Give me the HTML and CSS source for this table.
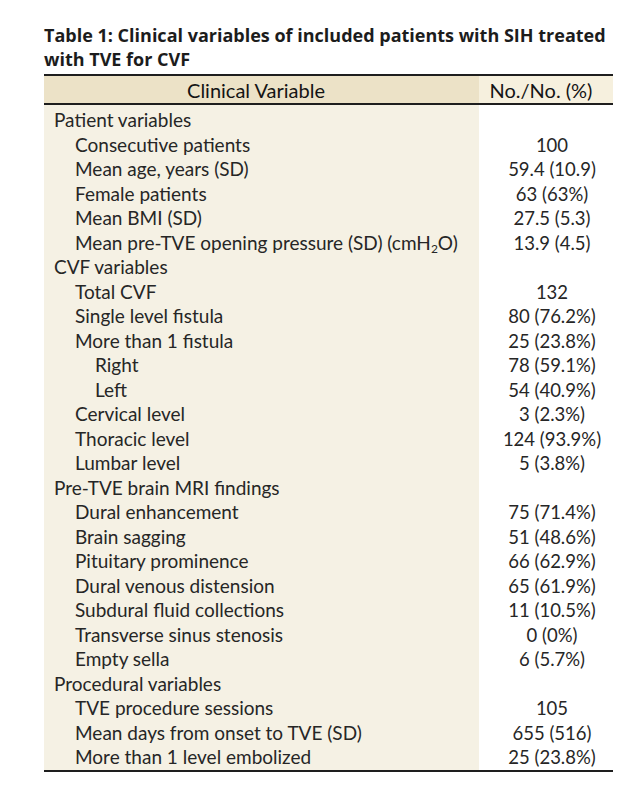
FILE: index.html
```html
<!DOCTYPE html>
<html>
<head>
<meta charset="utf-8">
<link rel="stylesheet" href="styles.css">
</head>
<body>
<div class="page">
  <h1 class="title">Table 1: Clinical variables of included patients with SIH treated<br>with TVE for CVF</h1>
  <table class="tbl">
    <thead>
      <tr><th class="h-var">Clinical Variable</th><th class="h-val">No./No. (%)</th></tr>
    </thead>
    <tbody>
      <tr class="first"><td class="var l0">Patient variables</td><td class="val"></td></tr>
      <tr><td class="var l1">Consecutive patients</td><td class="val">100</td></tr>
      <tr><td class="var l1">Mean age, years (SD)</td><td class="val">59.4 (10.9)</td></tr>
      <tr><td class="var l1">Female patients</td><td class="val">63 (63%)</td></tr>
      <tr><td class="var l1">Mean BMI (SD)</td><td class="val">27.5 (5.3)</td></tr>
      <tr><td class="var l1">Mean pre-TVE opening pressure (SD) (cmH<sub>2</sub>O)</td><td class="val">13.9 (4.5)</td></tr>
      <tr><td class="var l0">CVF variables</td><td class="val"></td></tr>
      <tr><td class="var l1">Total CVF</td><td class="val">132</td></tr>
      <tr><td class="var l1">Single level fistula</td><td class="val">80 (76.2%)</td></tr>
      <tr><td class="var l1">More than 1 fistula</td><td class="val">25 (23.8%)</td></tr>
      <tr><td class="var l2">Right</td><td class="val">78 (59.1%)</td></tr>
      <tr><td class="var l2">Left</td><td class="val">54 (40.9%)</td></tr>
      <tr><td class="var l1">Cervical level</td><td class="val">3 (2.3%)</td></tr>
      <tr><td class="var l1">Thoracic level</td><td class="val">124 (93.9%)</td></tr>
      <tr><td class="var l1">Lumbar level</td><td class="val">5 (3.8%)</td></tr>
      <tr><td class="var l0">Pre-TVE brain MRI findings</td><td class="val"></td></tr>
      <tr><td class="var l1">Dural enhancement</td><td class="val">75 (71.4%)</td></tr>
      <tr><td class="var l1">Brain sagging</td><td class="val">51 (48.6%)</td></tr>
      <tr><td class="var l1">Pituitary prominence</td><td class="val">66 (62.9%)</td></tr>
      <tr><td class="var l1">Dural venous distension</td><td class="val">65 (61.9%)</td></tr>
      <tr><td class="var l1">Subdural fluid collections</td><td class="val">11 (10.5%)</td></tr>
      <tr><td class="var l1">Transverse sinus stenosis</td><td class="val">0 (0%)</td></tr>
      <tr><td class="var l1">Empty sella</td><td class="val">6 (5.7%)</td></tr>
      <tr><td class="var l0">Procedural variables</td><td class="val"></td></tr>
      <tr><td class="var l1">TVE procedure sessions</td><td class="val">105</td></tr>
      <tr><td class="var l1">Mean days from onset to TVE (SD)</td><td class="val">655 (516)</td></tr>
      <tr class="last"><td class="var l1">More than 1 level embolized</td><td class="val">25 (23.8%)</td></tr>
    </tbody>
  </table>
</div>
</body>
</html>
```
FILE: styles.css
```css
html, body {
  margin: 0;
  padding: 0;
  background: #ffffff;
}
.page {
  padding: 24px 0 0 44px;
  color: #262626;
  font-family: "Lato", "Open Sans", sans-serif;
}
.title {
  margin: 0 0 3px 0;
  font-family: "Open Sans", sans-serif;
  font-weight: 700;
  font-size: 18px;
  line-height: 23.5px;
  color: #1c1c1c;
  width: 586px;
  white-space: nowrap;
}
.tbl {
  border-collapse: collapse;
  width: 569px;
  font-size: 19px;
}
.tbl th {
  font-weight: 400;
  font-size: 20px;
  height: 27px;
  padding: 0;
  border-top: 2px solid #1e1e1e;
  border-bottom: 2px solid #1e1e1e;
  text-align: center;
  color: #141414;
}
.h-var {
  width: 424px;
  background: #ece2c7;
  padding-right: 11px !important;
}
.h-val {
  background: #f6f0de;
  text-align: right;
  padding-right: 10px !important;
}
.tbl td {
  padding: 0;
  height: 24.5px;
  line-height: 24.5px;
  white-space: nowrap;
}
.var {
  background: #f5f1e4;
}
.val {
  background: #ffffff;
  text-align: center;
  font-size: 18.5px;
  padding-left: 12px !important;
}
.l0 { padding-left: 10px !important; }
.l1 { padding-left: 31px !important; }
.l2 { padding-left: 51px !important; }
.first td {
  padding-top: 3px !important;
}
.last td {
  border-bottom: 2px solid #1e1e1e;
}
sub {
  font-size: 12px;
  line-height: 0;
  vertical-align: -3px;
}
```
